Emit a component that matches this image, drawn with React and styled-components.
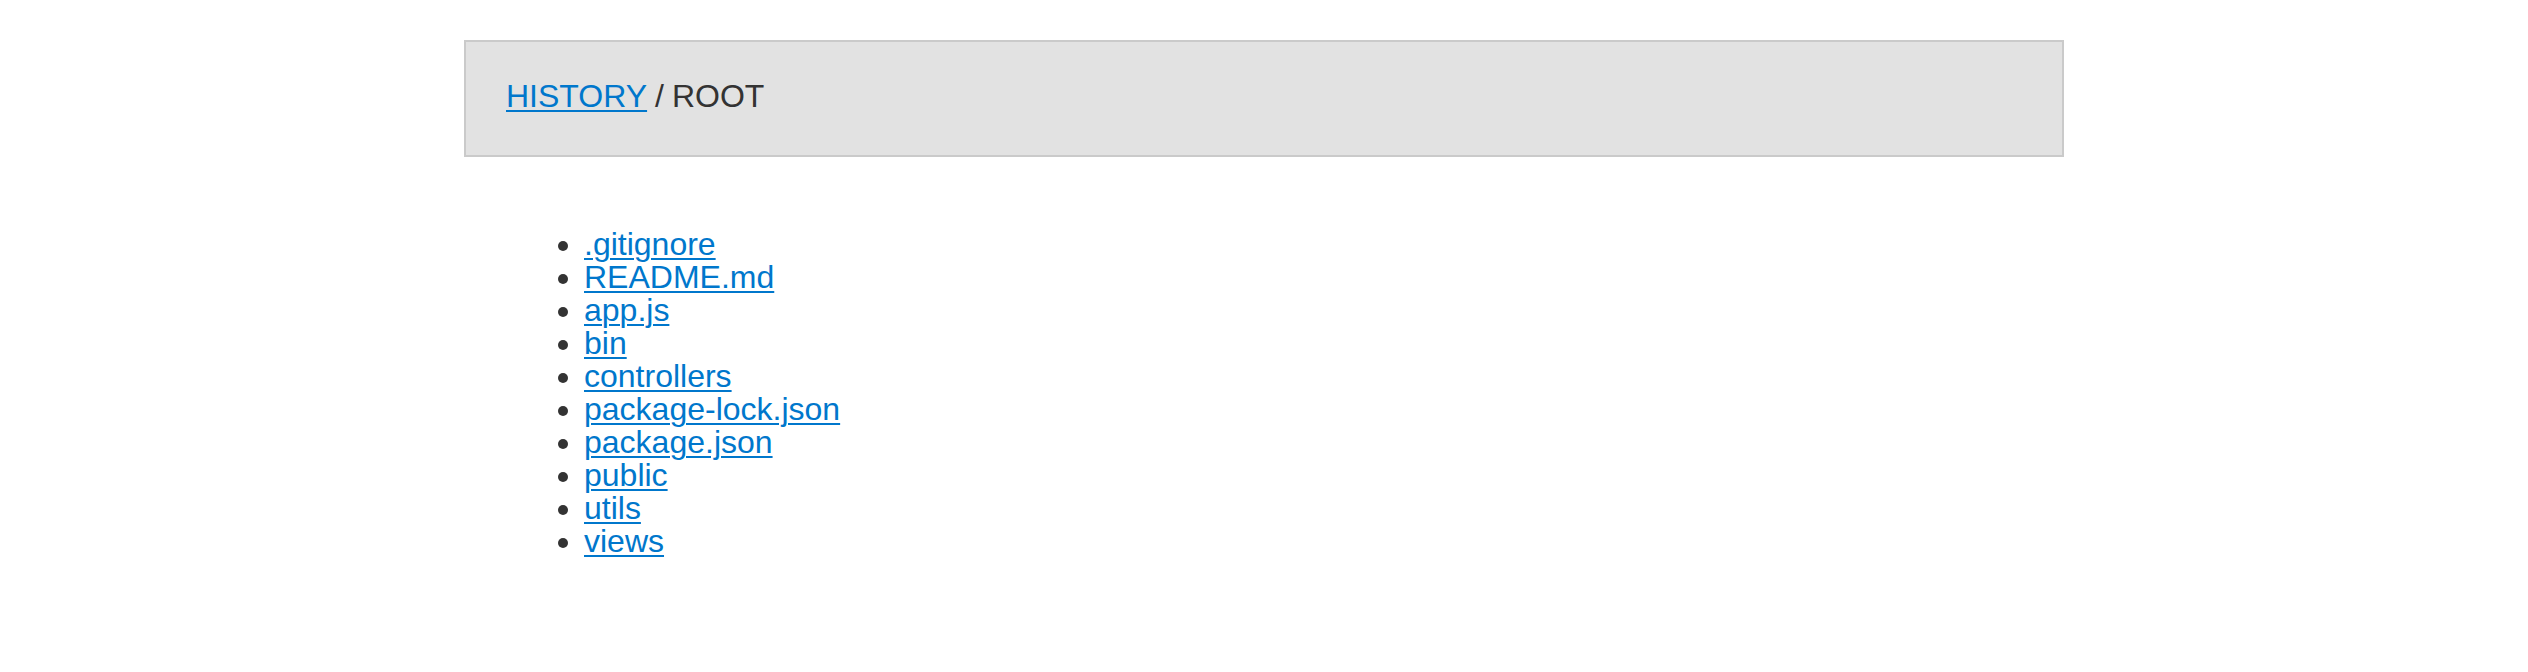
import React from 'react'
import styled, { createGlobalStyle } from 'styled-components'

const GlobalStyle = createGlobalStyle`
    html, body {
        margin: 0;
        padding: 0;
        background: #fff;
    }
    body {
        font-family: "Liberation Sans", Arial, Helvetica, sans-serif;
        font-size: 32px;
        color: #333;
    }
`

const Container = styled.div`
    width: 1600px;
    margin: 0 auto;
    padding-top: 40px;
`
const Breadcrumb = styled.div`
    background-color: #e2e2e2;
    border: 2px solid #cacaca;
    padding: 36px 40px 40px;
    font-size: 32px;
    color: #333;
`
const Link = styled.a`
    color: #0077cc;
    text-decoration: underline;
    text-underline-offset: 3px;
    text-decoration-thickness: 2px;
`
const Separator = styled.span`
    margin: 0 0.25em;
`
const FileList = styled.ul`
    margin: 71px 0 32px;
    padding-left: 120px;
    color: #333;
`
const FileItem = styled.li`
    line-height: 33px;
`

const files = [
    '.gitignore',
    'README.md',
    'app.js',
    'bin',
    'controllers',
    'package-lock.json',
    'package.json',
    'public',
    'utils',
    'views',
]

export default function App() {
    return (
        <>
            <GlobalStyle />
            <Container>
                <Breadcrumb>
                    <Link href="#">HISTORY</Link>
                    <Separator>/</Separator>
                    ROOT
                </Breadcrumb>
                <FileList>
                    {files.map(f => (
                        <FileItem key={f}>
                            <Link href="#">{f}</Link>
                        </FileItem>
                    ))}
                </FileList>
            </Container>
        </>
    )
}
